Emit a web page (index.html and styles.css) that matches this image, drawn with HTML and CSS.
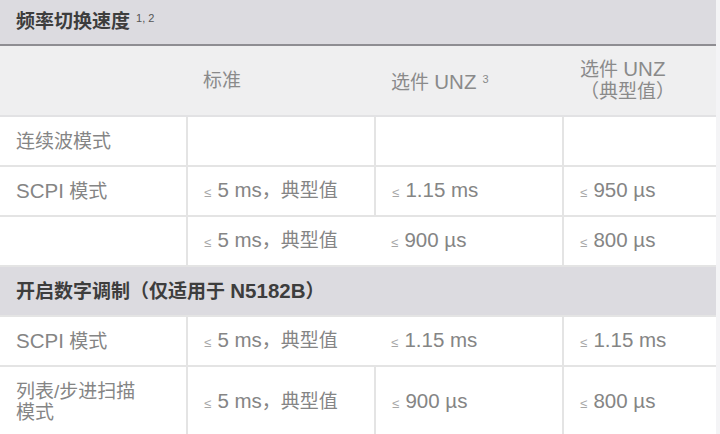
FILE: index.html
```html
<!DOCTYPE html>
<html lang="zh">
<head>
<meta charset="utf-8">
<link rel="stylesheet" href="styles.css">
</head>
<body>
<div class="page">
  <div class="title">频率切换速度<sup class="sup">1, 2</sup></div>
  <table class="spec">
    <colgroup>
      <col class="c1"><col class="c2"><col class="c3"><col class="c4">
    </colgroup>
    <thead>
      <tr>
        <th></th>
        <th>标准</th>
        <th>选件 <span class="v">UNZ</span><span class="hsup">3</span></th>
        <th class="two">选件 <span class="v">UNZ</span><br>（典型值）</th>
      </tr>
    </thead>
    <tbody>
      <tr>
        <td>连续波模式</td>
        <td></td>
        <td></td>
        <td></td>
      </tr>
      <tr>
        <td><span class="v">SCPI</span> 模式</td>
        <td><span class="le">≤</span> <span class="v">5 ms</span>，典型值</td>
        <td><span class="le">≤</span> <span class="v">1.15 ms</span></td>
        <td><span class="le">≤</span> <span class="v">950 µs</span></td>
      </tr>
      <tr>
        <td></td>
        <td><span class="le">≤</span> <span class="v">5 ms</span>，典型值</td>
        <td class="nol"><span class="le">≤</span> <span class="v">900 µs</span></td>
        <td><span class="le">≤</span> <span class="v">800 µs</span></td>
      </tr>
      <tr class="section">
        <td colspan="4">开启数字调制（仅适用于 <span class="v">N5182B</span>）</td>
      </tr>
      <tr>
        <td><span class="v">SCPI</span> 模式</td>
        <td><span class="le">≤</span> <span class="v">5 ms</span>，典型值</td>
        <td class="nol"><span class="le">≤</span> <span class="v">1.15 ms</span></td>
        <td><span class="le">≤</span> <span class="v">1.15 ms</span></td>
      </tr>
      <tr class="tall">
        <td class="two">列表/步进扫描<br>模式</td>
        <td><span class="le">≤</span> <span class="v">5 ms</span>，典型值</td>
        <td><span class="le">≤</span> <span class="v">900 µs</span></td>
        <td><span class="le">≤</span> <span class="v">800 µs</span></td>
      </tr>
    </tbody>
  </table>
</div>
</body>
</html>
```

FILE: styles.css
```css
html, body {
  margin: 0;
  padding: 0;
}
body {
  background: #f4f4f6;
  font-family: "Liberation Sans", "Noto Sans CJK SC", sans-serif;
  font-size: 19px;
  color: #858585;
  overflow: hidden;
}
.page {
  width: 716px;
}
.title {
  height: 46px;
  box-sizing: border-box;
  padding: 0 16px 1px;
  display: flex;
  align-items: center;
  background: #dcdbe0;
  border-bottom: 2px solid #8e8d92;
  font-weight: bold;
  color: #3d3d3d;
  line-height: 1;
}
.sup {
  font-size: 11px;
  font-weight: normal;
  color: #555;
  margin-left: 6px;
  align-self: flex-start;
  margin-top: 13px;
}
.spec {
  width: 716px;
  border-collapse: collapse;
  table-layout: fixed;
}
.c1 { width: 187px; }
.c2 { width: 188px; }
.c3 { width: 188px; }
.c4 { width: 153px; }

.v {
  font-size: 20.5px;
}
.spec th {
  height: 69px;
  padding: 0 0 0 16px;
  background: #efeff0;
  font-weight: normal;
  text-align: left;
  color: #8a8a8a;
  border-bottom: 2px solid #e2e2e4;
  line-height: 22px;
  white-space: nowrap;
}
.hsup {
  font-size: 11px;
  color: #8a8a8a;
  vertical-align: 6px;
  margin-left: 6px;
}
.spec th.two {
  padding-left: 17px;
}
.spec td {
  height: 48px;
  padding: 0 0 0 16px;
  background: #ffffff;
  border-bottom: 2px solid #e4e4e4;
  border-left: 2px solid #e4e4e4;
  white-space: nowrap;
  line-height: 21px;
}
.spec td:first-child {
  border-left: none;
}
.spec td.nol {
  border-left-style: hidden;
}
.spec tr.tall td {
  height: 70px;
}
.spec tr.section td {
  background: #dcdbe0;
  font-weight: bold;
  color: #3d3d3d;
  border-left: none;
}
.le {
  font-size: 13px;
  color: #a6a6a6;
  margin-right: 1px;
}
```
